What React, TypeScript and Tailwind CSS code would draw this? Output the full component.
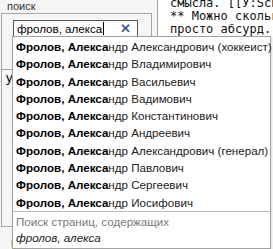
import React from "react";

const rows = [
  "Александрович (хоккеист)",
  "Владимирович",
  "Васильевич",
  "Вадимович",
  "Константинович",
  "Андреевич",
  "Александрович (генерал)",
  "Павлович",
  "Сергеевич",
  "Иосифович",
];

export default function App() {
  return (
    <div className="relative w-[273px] h-[249px] overflow-hidden bg-[#f6f6f6] font-['Liberation_Sans',Arial,sans-serif] text-[11.6px] text-black">
      <div className="flex h-full">
        {/* left panel */}
        <div className="w-[152px] shrink-0 flex flex-col">
          <div className="h-[13px] pl-[7px] text-[11px] leading-[12px] text-[#333]">поиск</div>
          <div className="ml-[1px] h-[221px] border-t border-l border-r border-b border-[#a7a7a7] flex flex-col">
            <div className="ml-[11px] mt-[6px] w-[125px] h-[18px] bg-white border border-[#555] flex items-center pl-[3px] pr-[6px]">
              <span className="leading-[14px]">фролов, алекса</span>
              <span className="w-px h-[13px] bg-black ml-[1px]" />
              <span className="ml-auto text-[13px] font-bold text-[#3f5f94] leading-[13px]">✕</span>
            </div>
            <div className="mt-[31px] flex-1 border-t border-[#a7a7a7] pl-[4px] text-[13px] leading-[15px]">у</div>
          </div>
          <div className="pl-[11px] mt-[10px] text-[12px] leading-[12px] text-[#222]">инструменты</div>
        </div>
        {/* text area */}
        <div className="ml-[5px] flex-1 border-l border-[#a7a7a7] bg-white pl-[12px] font-['DejaVu_Sans_Mono',monospace] text-[12px] leading-[13px] text-[#111] whitespace-nowrap">
          <div className="-mt-[3px]">смысла. [[У:Schizophrenia|</div>
          <div>** Можно сколько угодно</div>
          <div>просто абсурд.</div>
          <div className="mt-[209px] text-[#2a4ba0] underline">Отменить изменения</div>
        </div>
      </div>

      {/* suggestions dropdown */}
      <div className="absolute left-[12px] top-[36px] w-[259px] bg-white border border-[#a2a2a2] shadow-[1px_1px_2px_rgba(0,0,0,0.15)]">
        <div className="pt-[1px]">
          {rows.map((r) => (
            <div key={r} className="h-[17.3px] leading-[17.3px] pl-[3px] whitespace-nowrap text-[#222]">
              <b className="text-black">Фролов, Алекса</b>ндр {r}
            </div>
          ))}
        </div>
        <div className="border-t border-[#b9b9b9] pl-[3px] pt-[1px] pb-[2px]">
          <div className="leading-[17px] text-[#7a7a7a]">Поиск страниц, содержащих</div>
          <div className="leading-[16px] italic text-[#222]">фролов, алекса</div>
        </div>
      </div>
    </div>
  );
}
